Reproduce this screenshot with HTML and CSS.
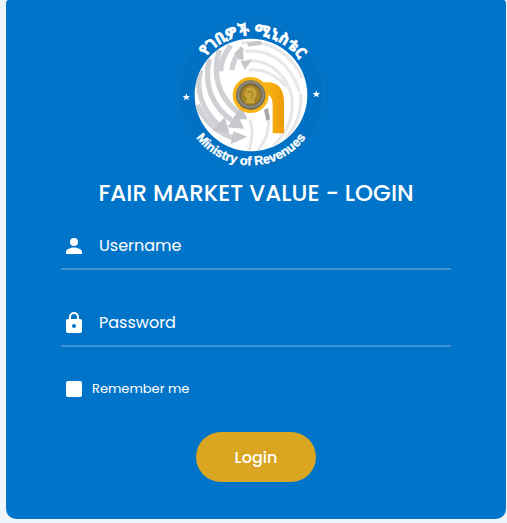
FILE: index.html
```html
<!DOCTYPE html>
<html lang="en">
<head>
<meta charset="utf-8">
<meta name="viewport" content="width=device-width, initial-scale=1">
<title>Fair Market Value - Login</title>
<link rel="stylesheet" href="styles.css">
</head>
<body>
<main class="card">
  <form class="login">
    <svg class="logo" viewBox="0 0 495 495" role="img" aria-label="Ministry of Revenues">
      <defs>
        <clipPath id="globe"><circle cx="243" cy="255" r="169"/></clipPath>
        <radialGradient id="coin" cx="50%" cy="48%" r="52%">
          <stop offset="0" stop-color="#c9a437"/>
          <stop offset="0.5" stop-color="#96782b"/>
          <stop offset="0.68" stop-color="#77663c"/>
          <stop offset="0.82" stop-color="#8f8d80"/>
          <stop offset="1" stop-color="#58584f"/>
        </radialGradient>
        <linearGradient id="gold" x1="0" y1="0" x2="1" y2="0">
          <stop offset="0" stop-color="#fbc21d"/>
          <stop offset="1" stop-color="#f09a06"/>
        </linearGradient>
        <path id="arc-top" d="M 73 208 A 178 178 0 0 1 417 208"/>
        <path id="arc-bottom" d="M 39 262 A 204 204 0 0 0 447 262"/>
      </defs>
      <circle class="disc" cx="243" cy="252" r="219"/>
      <circle cx="243" cy="255" r="169" fill="#fff"/>
      <g clip-path="url(#globe)" fill="none" stroke="#d0d1d4" stroke-width="16">
        <path d="M92 180 C76 240 96 300 150 350"/>
        <path d="M118 146 C100 222 124 290 192 336"/>
        <path d="M148 120 C124 196 148 266 208 310"/>
        <path d="M182 106 C160 136 152 160 152 184"/>
        <path d="M82 284 C104 336 148 374 204 388"/>
        <path d="M218 114 C198 136 188 158 186 180"/>
        <g stroke="#e7e7ea" stroke-width="9">
          <path d="M214 100 C290 84 362 128 398 206"/>
          <path d="M226 124 C300 116 364 162 388 246"/>
          <path d="M232 152 C294 148 352 190 368 270"/>
          <path d="M236 180 C280 176 322 196 348 230"/>
          <path d="M264 420 C292 388 300 352 294 310"/>
          <path d="M308 408 C350 372 370 328 366 270"/>
          <path d="M346 386 C380 348 396 300 392 250"/>
          <path d="M240 330 C248 352 248 386 238 420"/>
        </g>
        <g fill="#c6c7cb" stroke="none">
          <path d="M126 362 178 368 164 322Z"/>
          <path d="M172 352 222 356 202 312Z"/>
          <path d="M188 328 232 328 214 286Z"/>
          <path d="M182 402 232 380 190 364Z"/>
          <path d="M192 130 216 110 222 148 208 150Z"/>
          <path d="M212 152 246 150 224 180Z"/>
          <path d="M230 98 272 92 276 104 236 110Z"/>
        </g>
        <g fill="#fff" stroke="none">
          <path d="M152 208 166 180 218 184 208 204 190 222 166 218Z"/>
          <path d="M158 240 184 214 204 220 192 256 176 258Z"/>
        </g>
      </g>
      <path d="M282 300 289 332 300 328 294 294Z" fill="#a7a7a9"/>
      <path d="M264 217 H294 C326 217 342 240 342 276 V370 H308 V286 C308 264 300 252 282 250Z" fill="url(#gold)"/>
      <circle cx="242" cy="255" r="54" fill="#f8b414"/>
      <circle cx="242" cy="255" r="44" fill="url(#coin)"/>
      <circle cx="242" cy="255" r="29" fill="#a58325"/>
      <path d="M230 235 C250 224 264 240 258 258 L251 271 256 280 H224 L232 266 222 255Z" fill="#c9a43a"/>
      <path d="M232 247 244 244 249 254 242 266" fill="none" stroke="#94752a" stroke-width="3"/>
      <path class="star" d="M49 250 52 258 60 258 54 263 56 271 49 266 42 271 44 263 38 258 46 258Z"/>
      <path class="star" d="M439 241 442 249 450 249 444 254 446 262 439 257 432 262 434 254 428 249 436 249Z"/>
      <text class="seal seal-top"><textPath href="#arc-top" startOffset="51%">የገቢዎች ሚኒስቴር</textPath></text>
      <text class="seal seal-bottom"><textPath href="#arc-bottom" startOffset="50%">Ministry of Revenues</textPath></text>
    </svg>
    <h1 class="title">FAIR MARKET VALUE - LOGIN</h1>
    <label class="field">
      <svg class="icon" viewBox="2 2 20 20" aria-hidden="true"><path d="M12 12a5 5 0 1 0 0-10 5 5 0 0 0 0 10ZM2 22h20v-2.500c0-3.500-6.500-5.500-10-5.500S2 16 2 19.500Z"/></svg>
      <input class="input" type="text" name="username" placeholder="Username" aria-label="Username">
    </label>
    <label class="field">
      <svg class="icon icon-lock" viewBox="0 0 16 21" aria-hidden="true"><path fill-rule="evenodd" d="M14 7h-1V5A5 5 0 0 0 3 5v2H2a2 2 0 0 0-2 2v10a2 2 0 0 0 2 2h12a2 2 0 0 0 2-2V9a2 2 0 0 0-2-2ZM5 7V5a3 3 0 0 1 6 0v2ZM8 12a2 2 0 1 1 0 4 2 2 0 0 1 0-4Z"/></svg>
      <input class="input" type="password" name="password" placeholder="Password" aria-label="Password">
    </label>
    <label class="remember"><input class="check" type="checkbox" name="remember">Remember me</label>
    <button class="submit" type="submit">Login</button>
  </form>
</main>
</body>
</html>
```
FILE: styles.css
```css
* {
  box-sizing: border-box;
}

body {
  margin: 0;
  background: #edf5fa;
  font-family: Poppins, Inter, "Noto Sans", sans-serif;
  color: #fff;
}

.card {
  margin: 0 1px 4px 6px;
  padding: 10px 55px 37px;
  border-radius: 3px 3px 10px 10px;
  background: #0074c8;
}

.login {
  display: flex;
  flex-direction: column;
}

.logo {
  align-self: center;
  width: 165px;
  height: 165px;
  margin-right: 8px;
}

.disc {
  fill: #0071c4;
  stroke: #1479c4;
  stroke-width: 2;
}

.star {
  fill: #fff;
}

.seal {
  fill: #fff;
  stroke: #fff;
  font-weight: 700;
  text-anchor: middle;
}

.seal-top {
  font-family: "Noto Sans Ethiopic", "Noto Sans", sans-serif;
  font-size: 46px;
  stroke-width: 2;
}

.seal-bottom {
  font-family: "Liberation Sans", sans-serif;
  font-size: 38px;
  stroke-width: 1;
}

.title {
  margin: 0 0 12px;
  font-size: 23px;
  line-height: 36px;
  font-weight: 500;
  text-align: center;
  white-space: nowrap;
}

.field {
  display: flex;
  align-items: center;
  height: 47px;
  margin-bottom: 30px;
  padding-left: 5px;
  border-bottom: 2px solid #3d94d5;
}

.icon {
  flex: none;
  width: 16px;
  height: 16px;
  fill: #fff;
}

.icon-lock {
  height: 21px;
}

.input {
  flex: 1;
  min-width: 0;
  margin-left: 17px;
  padding: 0;
  border: 0;
  outline: 0;
  background: transparent;
  color: #fff;
  font: inherit;
  font-size: 16px;
  line-height: 24px;
}

.input::placeholder {
  color: #fff;
  opacity: 1;
}

.remember {
  display: flex;
  align-items: center;
  align-self: flex-start;
  gap: 10px;
  margin: 2px 0 33px 5px;
  font-size: 13px;
  line-height: 20px;
}

.check {
  appearance: none;
  width: 16px;
  height: 16px;
  margin: 0;
  border-radius: 2px;
  background: #fff;
}

.check:checked {
  border: 4px solid #fff;
  background: #0074c8;
}

.submit {
  align-self: center;
  min-width: 120px;
  height: 50px;
  border: 0;
  border-radius: 25px;
  background: #daa520;
  color: #fff;
  font: inherit;
  font-size: 16px;
  font-weight: 500;
}
```
